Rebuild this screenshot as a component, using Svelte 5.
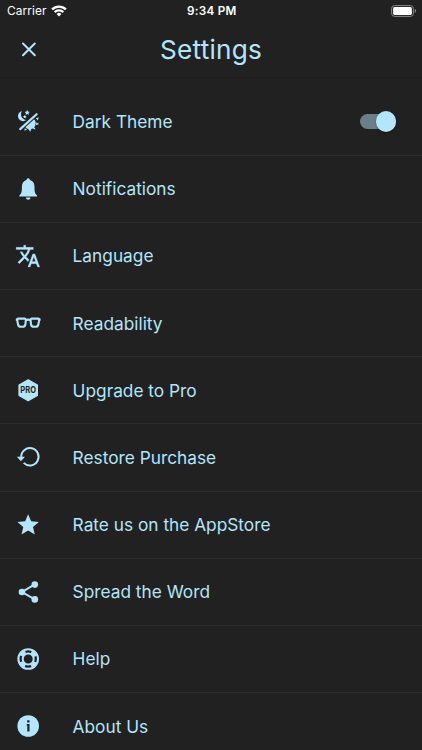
<script>
  const items = [
    { icon: 'theme', label: 'Dark Theme', toggle: true },
    { icon: 'bell', label: 'Notifications' },
    { icon: 'language', label: 'Language' },
    { icon: 'glasses', label: 'Readability' },
    { icon: 'pro', label: 'Upgrade to Pro' },
    { icon: 'restore', label: 'Restore Purchase' },
    { icon: 'star', label: 'Rate us on the AppStore' },
    { icon: 'share', label: 'Spread the Word' },
    { icon: 'help', label: 'Help' },
    { icon: 'info', label: 'About Us' }
  ];
  let dark = $state(true);
</script>

<div class="screen">
  <div class="status">
    <div class="carrier">
      <span>Carrier</span>
      <svg width="16" height="12" viewBox="0 0 16 12" fill="none" stroke="#fff" stroke-width="2.3">
        <path d="M1.1 4.4a9.8 9.8 0 0 1 13.8 0M3.7 7.1a6.1 6.1 0 0 1 8.6 0" />
        <path d="M8 11.4 5.6 9a3.4 3.4 0 0 1 4.8 0z" fill="#fff" stroke="none" />
      </svg>
    </div>
    <span class="time">9:34 PM</span>
    <svg class="battery" width="26" height="12" viewBox="0 0 26 12">
      <rect x=".6" y=".6" width="21.8" height="10.8" rx="3" fill="none" stroke="#8b8b8b" />
      <rect x="2.1" y="2.1" width="18.8" height="7.8" rx="1.6" fill="#fff" />
      <path d="M23.8 4.1q1.4.6 1.4 1.9t-1.4 1.9z" fill="#8b8b8b" />
    </svg>
  </div>

  <header>
    <button class="close" aria-label="Close">
      <svg width="16" height="16" viewBox="0 0 16 16" stroke="#b3e5fc" stroke-width="2" stroke-linecap="round">
        <path d="M2 1.5 13.8 13.3M13.8 1.5 2 13.3" />
      </svg>
    </button>
    <h1>Settings</h1>
  </header>

  <main>
    {#each items as item}
      <div class="row">
        <svg class="icon" width="28" height="28" viewBox="0 0 28 28" fill="#b3e5fc">
          {#if item.icon === 'theme'}
            <path d="M6.2 22.1 22.6 7.2" stroke="#b3e5fc" stroke-width="2.2" stroke-linecap="round" />
            <path d="M7.6 4.1a5.1 5.1 0 1 0 4.2 9A5.8 5.8 0 0 1 7.6 4.1z" transform="translate(.4 0)" />
            <path d="m13.2 3 .8 1.6 1.8.3-1.3 1.2.3 1.8-1.6-.9-1.6.9.3-1.8-1.3-1.2 1.8-.3zM10.8 7.8l.6 1.2 1.3.2-1 .9.3 1.3-1.2-.6-1.2.6.3-1.3-1-.9 1.3-.2z" />
            <path d="M11.4 20.2 20.2 12.2A5.8 5.8 0 0 1 11.4 20.2z" />
            <path d="m21.9 10.9 3-.3-1.4 2.9zM22.3 15.3l2.8 1.6-3 1.3zM19.8 19.4l1.9 3-3.4-.8zM14.3 22l3.2-.2-1.3 2.9zM10.5 21.6l2.8.4-2.6 2z" />
          {:else if item.icon === 'bell'}
            <path d="M14.2 3.2c1 0 1.7.7 1.7 1.9 3.3.8 4.6 3.4 4.6 6.8 0 5 .5 6.8 2.5 8.4v1.1H5.4v-1.1c2-1.6 2.5-3.4 2.5-8.4 0-3.4 1.3-6 4.6-6.8 0-1.2.7-1.9 1.7-1.9zM11.9 22.4h4.6a2.3 2.3 0 0 1-4.6 0z" />
          {:else if item.icon === 'language'}
            <path transform="translate(1.1 1) scale(1.07 1.09)" stroke="#b3e5fc" stroke-width=".25" d="m12.87 15.07-2.54-2.51.03-.03A17.52 17.52 0 0 0 14.07 6H17V4h-7V2H8v2H1v1.99h11.17C11.5 7.92 10.44 9.75 9 11.35 8.07 10.32 7.3 9.19 6.69 8h-2c.73 1.63 1.73 3.17 2.98 4.56l-5.09 5.02L4 19l5-5 3.11 3.11.76-2.04zM18.5 10h-2L12 22h2l1.12-3h4.75L21 22h2l-4.5-12zm-2.62 7 1.62-4.33L19.12 17h-3.24z" />
          {:else if item.icon === 'glasses'}
            <g fill="none" stroke="#b3e5fc" stroke-width="2.1" stroke-linejoin="round">
              <path d="M4.4 9.6h6q1.5 0 1.4 1.5l-.3 3.7q-.3 3-3 3H6.9q-2.6 0-3-3l-.6-3.7q-.2-1.5 1.1-1.5zM18 9.6h6q1.3 0 1.1 1.5l-.6 3.7q-.4 3-3 3h-1.6q-2.7 0-3-3l-.3-3.7Q16.5 9.6 18 9.6z" />
              <path d="M1.8 10.6h2M24.6 10.6h2M11.7 11.2q2.5-1.2 5 0" />
            </g>
          {:else if item.icon === 'pro'}
            <path d="M14.2 3.7 23.4 9v10.5l-9.2 5.2L5 19.5V9z" stroke="#b3e5fc" stroke-width="1.2" stroke-linejoin="round" />
            <text transform="translate(14.2 17.2) scale(.86 1)" text-anchor="middle">PRO</text>
          {:else if item.icon === 'restore'}
            <path d="M7.2 14.3a8.7 8.7 0 1 1 2.5 5.6" fill="none" stroke="#b3e5fc" stroke-width="2" />
            <path d="M2.9 13.8h8.1l-4.1 4.5z" />
          {:else if item.icon === 'star'}
            <path transform="translate(1.3 1.1) scale(1.07)" d="M12 17.27 18.18 21l-1.64-7.03L22 9.24l-7.19-.61L12 2 9.19 8.63 2 9.24l5.46 4.73L5.82 21z" />
          {:else if item.icon === 'share'}
            <path d="M20.8 6.4 8 14l12.8 7.4" fill="none" stroke="#b3e5fc" stroke-width="2" />
            <circle cx="8" cy="14" r="3.3" /><circle cx="20.8" cy="6.6" r="3.3" /><circle cx="20.8" cy="21.4" r="3.3" />
          {:else if item.icon === 'help'}
            <g fill="none" stroke="#b3e5fc">
              <circle cx="14.2" cy="14" r="9.8" stroke-width="2.1" />
              <circle cx="14.2" cy="14" r="5.5" stroke-width="2" />
              <circle cx="14.2" cy="14" r="7.4" stroke-width="4.2" stroke-dasharray="5.8 5.824" stroke-dashoffset="-2.9" />
            </g>
          {:else}
            <circle cx="14.2" cy="14" r="10.8" />
            <path d="M13.2 8.3h2.3v2.3h-2.3zM12.7 12h2.8v7.5h-2.2v-6h-.6z" fill="#212121" />
          {/if}
        </svg>
        <span class="label">{item.label}</span>
        {#if item.toggle}
          <button class="toggle" class:on={dark} aria-label="Dark Theme" onclick={() => (dark = !dark)}>
            <span class="knob"></span>
          </button>
        {/if}
      </div>
    {/each}
  </main>
</div>

<style>
  :global(body) { margin: 0; background: #212121; }
  .screen {
    width: 422px; height: 750px; overflow: hidden; background: #212121; color: #b3e5fc;
    font-family: Inter, "Liberation Sans", sans-serif; display: flex; flex-direction: column;
  }
  .status {
    flex: none; height: 22px; box-sizing: border-box; padding: 0 5.5px 0 7px; color: #fff;
    display: grid; grid-template-columns: 1fr auto 1fr; align-items: center;
  }
  .carrier { display: flex; align-items: center; gap: 4.5px; font-size: 11.9px; letter-spacing: .1px; }
  .carrier span { line-height: 14px; padding-bottom: 1px; }
  .time { font-size: 11.7px; font-weight: 600; letter-spacing: .25px; }
  .battery { justify-self: end; }
  header {
    flex: none; height: 56px; box-sizing: border-box; border-bottom: 1px solid #1e1e1e;
    display: grid; grid-template-columns: 58px 1fr 58px; align-items: center;
  }
  button { border: 0; padding: 0; background: none; }
  .close { display: flex; justify-content: center; }
  h1 { margin: 0; text-align: center; font-size: 26.2px; line-height: 32px; font-weight: 400; letter-spacing: .2px; }
  main { flex: none; padding-top: 10.4px; }
  .row {
    height: 67.2px; box-sizing: border-box; border-bottom: 1px solid #2b2b2b;
    display: flex; align-items: center; padding: 0 26px 0 14px;
  }
  .icon { flex: none; }
  .icon text { font: 700 8.8px Inter, sans-serif; fill: #212121; }
  .label { margin-left: 30.6px; padding-top: 1px; flex: 1; font-size: 17.3px; line-height: 24px; letter-spacing: 0; white-space: nowrap; }
  .toggle { position: relative; width: 36px; height: 21px; display: flex; align-items: center; }
  .toggle::before { content: ""; position: absolute; inset: 3px 0; border-radius: 8px; background: #6a8088; }
  .toggle.on { justify-content: flex-end; }
  .knob { position: relative; width: 20.5px; height: 20.5px; border-radius: 50%; background: #b3e5fc; box-shadow: 0 1px 2px #0005; }
</style>
